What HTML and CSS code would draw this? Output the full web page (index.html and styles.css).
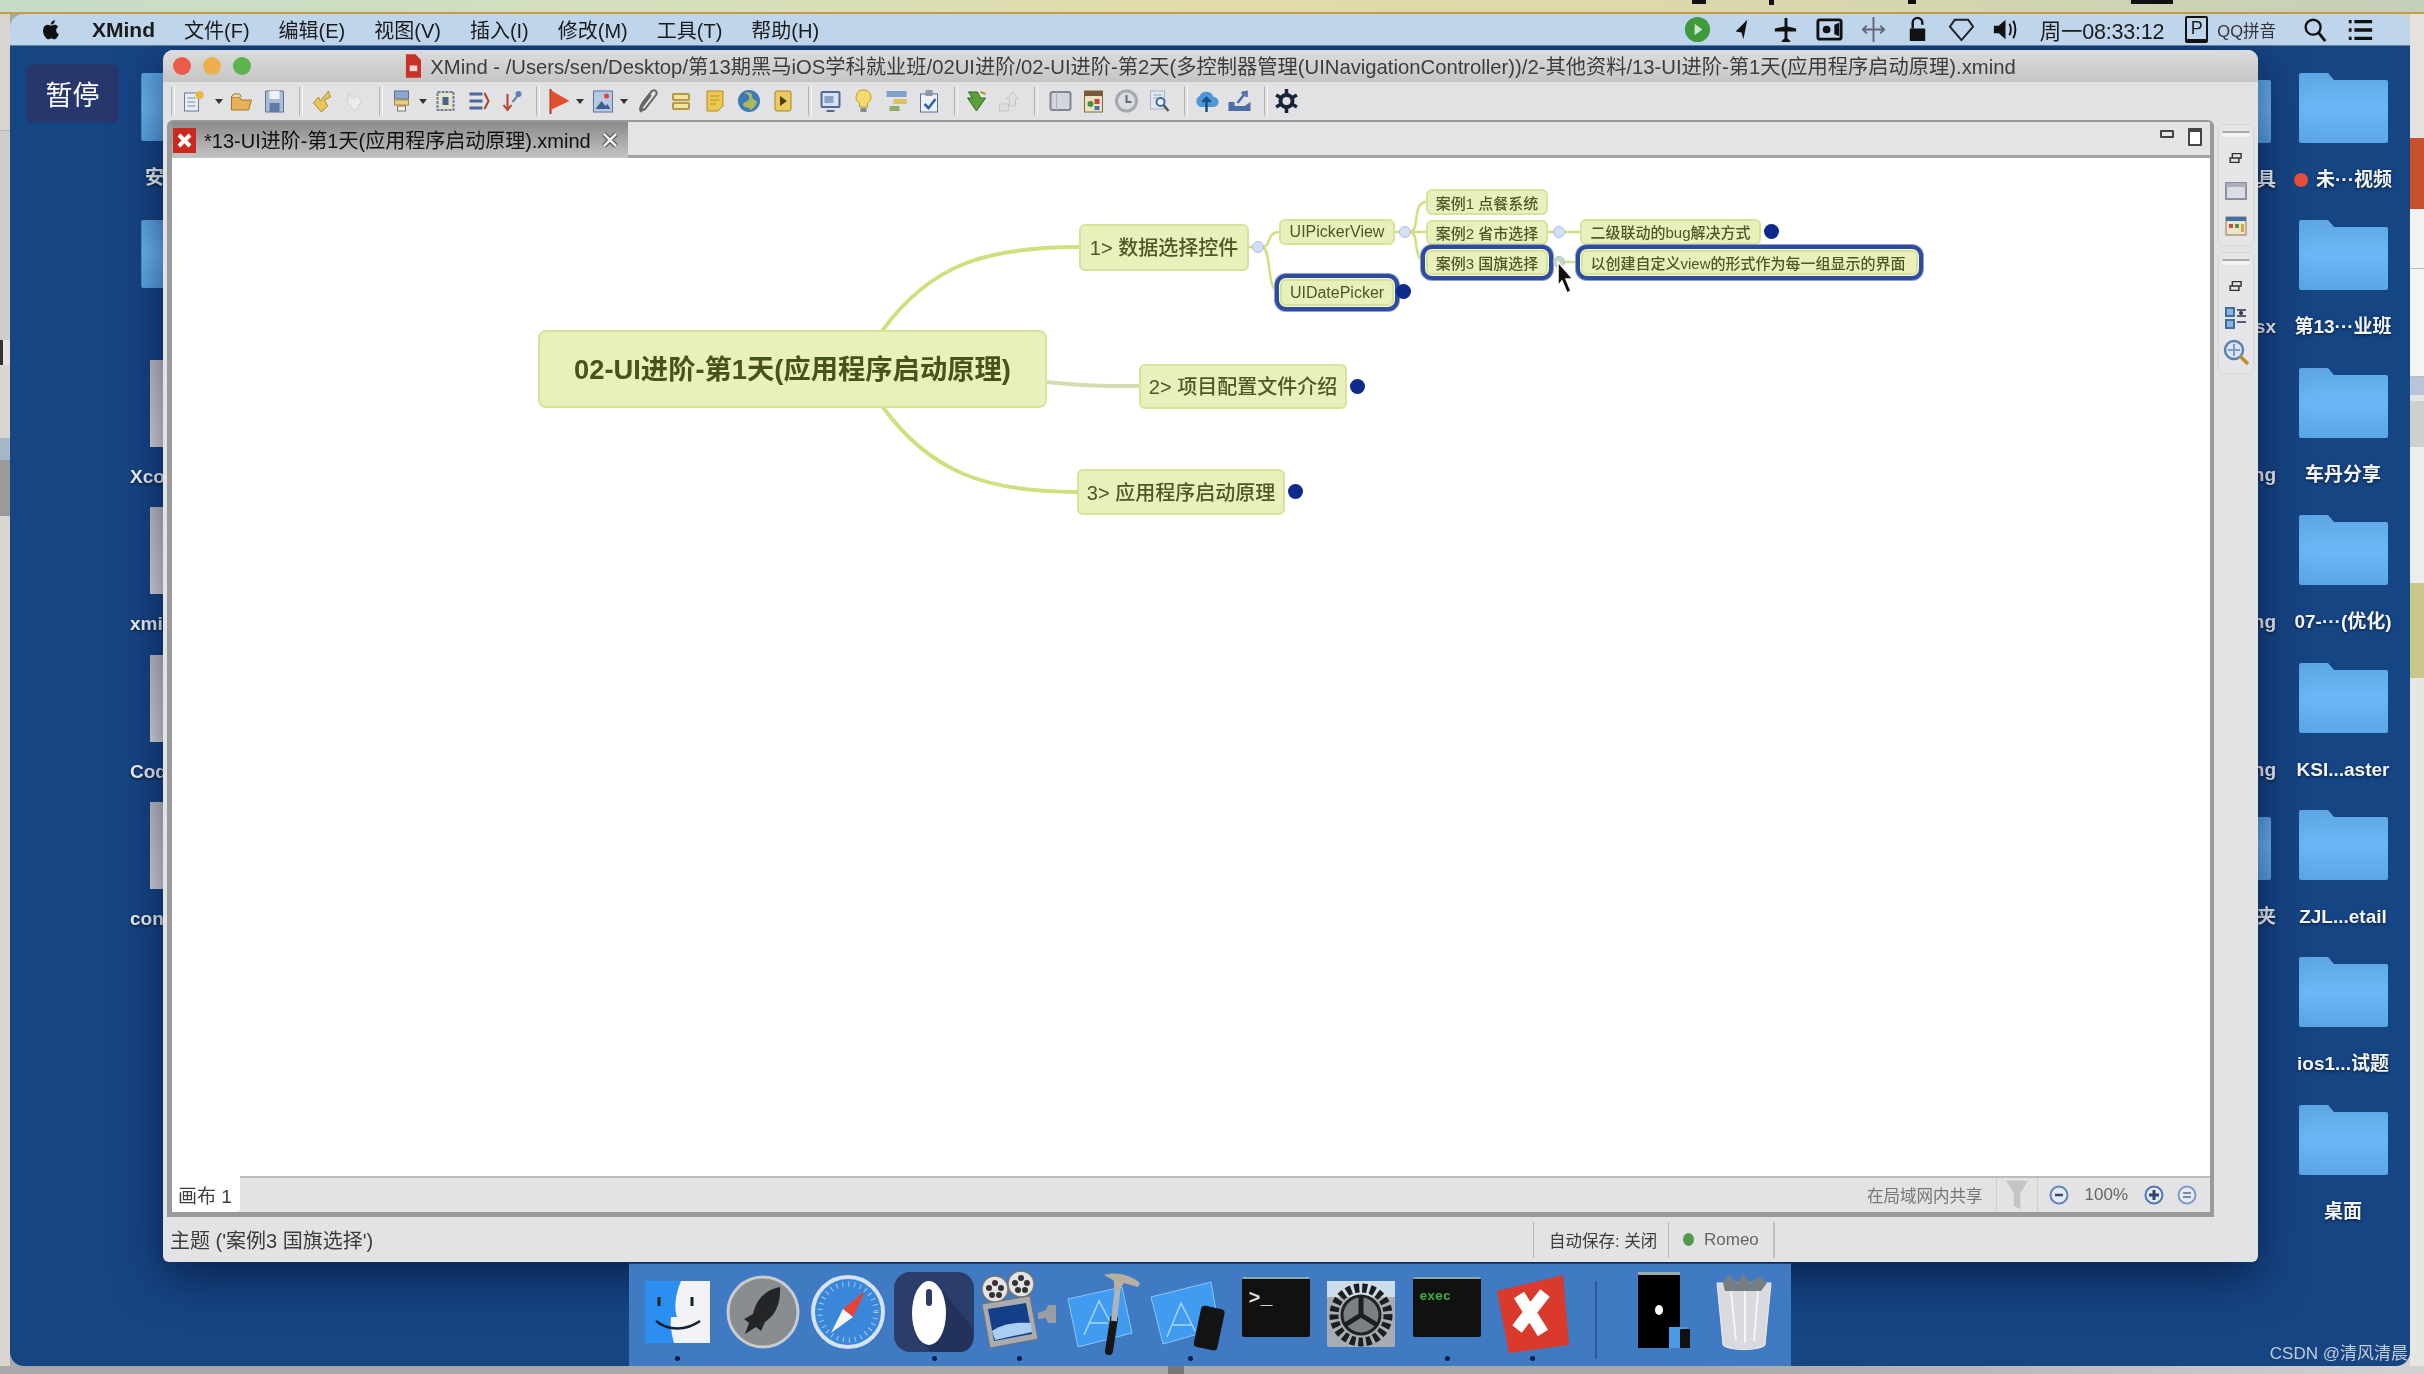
FILE: index.html
```html
<!DOCTYPE html>
<html lang="zh">
<head>
<meta charset="utf-8">
<title>XMind</title>
<link rel="stylesheet" href="styles.css">
</head>
<body>
<div class="stage">
  <div class="wall"><i class="sil s1"></i><i class="sil s2"></i><i class="sil s3"></i><i class="sil s4"></i></div>
  <div class="mid">
    <div class="edge-l"><i class="el a"></i><i class="el b"></i><i class="el c"></i><i class="el d"></i><i class="el e"></i></div>
    <div class="screen">
      <header class="menubar">
        <nav class="menu-left">
          <svg class="apple" viewBox="0 0 24 28"><path d="M17 14.6c0-3 2.4-4.400 2.500-4.500-1.400-2-3.500-2.300-4.200-2.300-1.800-.2-3.500 1-4.400 1s-2.300-1-3.800-1C5 7.800 3.200 8.900 2.200 10.600c-2 3.500-.5 8.700 1.500 11.600 1 1.400 2.100 3 3.700 2.900 1.500-.1 2-1 3.800-1s2.300 1 3.800.9c1.600 0 2.600-1.400 3.600-2.900 1.100-1.600 1.600-3.200 1.600-3.300-.1 0-3.200-1.200-3.200-4.600zM14.100 5.900c.8-1 1.300-2.300 1.200-3.700-1.200 0-2.600.8-3.400 1.800-.7.900-1.400 2.200-1.200 3.500 1.300.1 2.600-.7 3.400-1.600z" fill="#111"/></svg>
          <b class="menu-app">XMind</b>
          <span>文件(F)</span><span>编辑(E)</span><span>视图(V)</span><span>插入(I)</span><span>修改(M)</span><span>工具(T)</span><span>帮助(H)</span>
        </nav>
        <div class="menu-right">
          <div class="tray">
            <svg viewBox="0 0 30 30"><circle cx="15" cy="15" r="13" fill="#3f9a3c"/><path d="M12 9l8 6-8 6z" fill="#cfe8cc"/></svg>
            <svg viewBox="0 0 30 30"><path d="M21 5L9 17l6 1 2 7z" fill="#111"/></svg>
            <svg viewBox="0 0 30 30"><path d="M14 3h3v9l9 2v3h-9v7l3 3v1h-9v-1l3-3v-7H4v-3l10-2z" fill="#111"/></svg>
            <svg viewBox="0 0 30 30"><rect x="3" y="5" width="24" height="20" rx="2" fill="none" stroke="#111" stroke-width="3"/><path d="M20 10l5-2v14l-5-2z" fill="#111"/><circle cx="12" cy="15" r="4" fill="#111"/></svg>
            <svg viewBox="0 0 30 30"><path d="M15 2v26M8 11l-4 4 4 4M22 11l4 4-4 4M5 15h20" stroke="#667" stroke-width="2" fill="none"/></svg>
            <svg viewBox="0 0 30 30"><rect x="7" y="14" width="16" height="13" rx="1" fill="#111"/><path d="M10 14V8a5 5 0 0 1 10 0v2" fill="none" stroke="#111" stroke-width="2.500"/></svg>
            <svg viewBox="0 0 30 30"><path d="M15 26L3 12l5-7h14l5 7z" fill="none" stroke="#222" stroke-width="2"/></svg>
            <svg viewBox="0 0 30 30"><path d="M3 11h5l7-6v20l-7-6H3z" fill="#111"/><path d="M19 9c2 3 2 9 0 12M23 6c3 5 3 13 0 18" fill="none" stroke="#111" stroke-width="2"/></svg>
          </div>
          <span class="clock">周一08:33:12</span>
          <span class="ime-box">P</span>
          <span class="ime">QQ拼音</span>
          <svg class="mi search" viewBox="0 0 30 30"><circle cx="13" cy="12" r="8" fill="none" stroke="#111" stroke-width="2.500"/><path d="M19 18l7 9" stroke="#111" stroke-width="3"/></svg>
          <svg class="mi list" viewBox="0 0 30 30"><path d="M3 6h3M9 6h19M3 15h3M9 15h19M3 24h3M9 24h19" stroke="#111" stroke-width="3.500"/></svg>
        </div>
      </header>

      <main class="desktop">
        <section class="col col-left">
          <div class="item"><svg class="folder"><use href="#folder"/></svg><p class="lbl first-lbl">安装工具</p></div>
          <div class="item"><svg class="folder"><use href="#folder"/></svg><p class="lbl">&nbsp;</p></div>
          <div class="item"><div class="doc"></div><p class="lbl">Xcode</p></div>
          <div class="item"><div class="doc"></div><p class="lbl">xmind</p></div>
          <div class="item"><div class="doc"></div><p class="lbl">Coder</p></div>
          <div class="item"><div class="doc"></div><p class="lbl">conf</p></div>
        </section>
        <section class="col col-mid">
          <div class="item"><svg class="folder"><use href="#folder"/></svg><p class="lbl">软件工具</p></div>
          <div class="item"><div class="blank"></div><p class="lbl">表格.xlsx</p></div>
          <div class="item"><div class="blank"></div><p class="lbl">截图.png</p></div>
          <div class="item"><div class="blank"></div><p class="lbl">截图.png</p></div>
          <div class="item"><div class="blank"></div><p class="lbl">截图.png</p></div>
          <div class="item"><svg class="folder"><use href="#folder"/></svg><p class="lbl">文件夹</p></div>
        </section>
        <section class="col col-right">
          <div class="item"><svg class="folder"><use href="#folder"/></svg><p class="lbl"><i class="tag"></i>未···视频</p></div>
          <div class="item"><svg class="folder"><use href="#folder"/></svg><p class="lbl">第13···业班</p></div>
          <div class="item"><svg class="folder"><use href="#folder"/></svg><p class="lbl">车丹分享</p></div>
          <div class="item"><svg class="folder"><use href="#folder"/></svg><p class="lbl">07-···(优化)</p></div>
          <div class="item"><svg class="folder"><use href="#folder"/></svg><p class="lbl">KSI...aster</p></div>
          <div class="item"><svg class="folder"><use href="#folder"/></svg><p class="lbl">ZJL...etail</p></div>
          <div class="item"><svg class="folder"><use href="#folder"/></svg><p class="lbl">ios1...试题</p></div>
          <div class="item"><svg class="folder"><use href="#folder"/></svg><p class="lbl">桌面</p></div>
        </section>

        <div class="pause">暂停</div>

        <section class="window">
          <div class="titlebar">
            <div class="lights"><i class="light red"></i><i class="light amber"></i><i class="light green"></i></div>
            <div class="title">
              <svg class="title-ico" viewBox="0 0 17 25"><path d="M1 0h10l6 6v19H1z" fill="#c8322a"/><rect x="5" y="12" width="8" height="6" fill="#f3d8d5"/></svg>
              <span>XMind - /Users/sen/Desktop/第13期黑马iOS学科就业班/02UI进阶/02-UI进阶-第2天(多控制器管理(UINavigationController))/2-其他资料/13-UI进阶-第1天(应用程序启动原理).xmind</span>
            </div>
          </div>

          <div class="toolbar">
            <i class="sep"></i>
            <svg class="ti" viewBox="0 0 26 26"><rect x="4" y="5" width="14" height="18" fill="#e8ecf4" stroke="#6b7c99"/><path d="M7 10h8M7 14h8M7 18h8" stroke="#7b8aa5"/><circle cx="19" cy="7" r="4" fill="#e8b93a"/></svg><i class="ar ar1"></i>
            <svg class="ti" viewBox="0 0 26 26"><path d="M3 9h8l2 3h10l-3 10H3z" fill="#e6b15a" stroke="#a27424"/><path d="M3 9l2-3h6l2 3" fill="#f1d9a5" stroke="#a27424"/></svg>
            <svg class="ti" viewBox="0 0 26 26"><path d="M4 3h18v21H4z" fill="#a9bbd8" stroke="#5f7395"/><rect x="8" y="3" width="10" height="8" fill="#eef1f6"/><rect x="8" y="15" width="10" height="9" fill="#5f7aa5"/></svg>
            <i class="sep"></i>
            <svg class="ti" viewBox="0 0 26 26"><path d="M20 3l2 6-6 3 3 6-6 6-8-9 5-6 2 4z" fill="#e9c65a" stroke="#a98a28"/></svg>
            <svg class="ti" viewBox="0 0 26 26"><path d="M7 5l5 6 3-4 5 6-6 10-8-8z" fill="#ececec" stroke="#cfcfcf"/></svg>
            <i class="sep"></i>
            <svg class="ti" viewBox="0 0 26 26"><rect x="6" y="3" width="14" height="8" fill="#8fa6cc" stroke="#5c6f93"/><rect x="6" y="12" width="14" height="5" fill="#e8cf7e" stroke="#a08b3d"/><rect x="9" y="18" width="8" height="5" fill="#f3f1e6" stroke="#777"/></svg><i class="ar"></i>
            <svg class="ti" viewBox="0 0 26 26"><rect x="5" y="4" width="16" height="18" fill="#e6e6c6" stroke="#6f7fa3" stroke-dasharray="3 1" stroke-width="2"/><rect x="10" y="9" width="6" height="8" fill="#4c6291"/></svg>
            <svg class="ti" viewBox="0 0 26 26"><path d="M4 6h13M4 13h13M4 20h13" stroke="#4d6799" stroke-width="3"/><path d="M19 5l4 8-4 8" fill="none" stroke="#a5432f" stroke-width="2"/></svg>
            <svg class="ti" viewBox="0 0 26 26"><path d="M9 6v14M5 17l4 5 4-5" fill="none" stroke="#b3402c" stroke-width="2"/><circle cx="20" cy="6" r="3" fill="#5d7fb5"/><path d="M14 14l5-6" stroke="#6a7e9f" stroke-width="2"/></svg>
            <i class="sep"></i>
            <svg class="ti" viewBox="0 0 26 26"><path d="M5 1v25" stroke="#a23a22" stroke-width="2"/><path d="M5 2l19 11L5 22z" fill="#e2512e"/></svg><i class="ar"></i>
            <svg class="ti" viewBox="0 0 26 26"><rect x="4" y="3" width="19" height="21" fill="#b9c9e3" stroke="#5f7395"/><path d="M6 21l6-8 4 5 2-2 3 5z" fill="#3f5f92"/><circle cx="17" cy="8" r="2.500" fill="#d9473a"/></svg><i class="ar"></i>
            <svg class="ti tw" viewBox="0 0 26 26"><path d="M8 24c-5-3 0-9 10-21 3-2 6 1 4 4L11 21c-2 2-4 0-3-2l9-12" fill="none" stroke="#666" stroke-width="2"/></svg>
            <svg class="ti tw" viewBox="0 0 26 26"><rect x="5" y="6" width="16" height="6" rx="1" fill="#f3e3a0" stroke="#b89a3e" stroke-width="2"/><rect x="5" y="15" width="16" height="6" rx="1" fill="#f3e3a0" stroke="#b89a3e" stroke-width="2"/></svg>
            <svg class="ti tw" viewBox="0 0 26 26"><path d="M5 3h16v15l-5 5H5z" fill="#ecc84f" stroke="#ae8d25"/><path d="M8 8h9M8 12h9M8 16h6" stroke="#b4912e"/></svg>
            <svg class="ti tw" viewBox="0 0 26 26"><circle cx="13" cy="13" r="11" fill="#3e78b6"/><path d="M8 5c4 1 6 3 5 6s-6 2-6 6c2 4 6 1 7 5 5-2 7-6 7-9-4-1-5-3-5-7-3-2-5-2-8-1z" fill="#a8b85a"/></svg>
            <svg class="ti tw" viewBox="0 0 26 26"><rect x="5" y="3" width="16" height="20" rx="2" fill="#eccb5e" stroke="#9f8530"/><path d="M10 8l7 5-7 5z" fill="#4a3d14"/></svg>
            <i class="sep"></i>
            <svg class="ti" viewBox="0 0 26 26"><rect x="4" y="4" width="18" height="15" rx="1" fill="#d7e3f2" stroke="#4f6a94" stroke-width="2"/><rect x="7" y="8" width="9" height="7" fill="#88a4c9"/><path d="M9 23h8" stroke="#4f6a94" stroke-width="2"/></svg>
            <svg class="ti" viewBox="0 0 26 26"><path d="M13 2a7 7 0 0 1 4 13v4H9v-4a7 7 0 0 1 4-13z" fill="#f3da6a" stroke="#b89a30"/><rect x="10" y="20" width="6" height="4" fill="#888"/></svg>
            <svg class="ti" viewBox="0 0 26 26"><rect x="3" y="3" width="20" height="6" fill="#7fa0c8"/><rect x="10" y="11" width="13" height="5" fill="#dcc15c"/><rect x="6" y="18" width="10" height="5" fill="#8fae6a"/></svg>
            <svg class="ti" viewBox="0 0 26 26"><rect x="4" y="6" width="17" height="18" fill="#eef2f8" stroke="#566f98"/><rect x="9" y="2" width="7" height="6" fill="#8a97ad"/><path d="M8 16l4 4 7-9" fill="none" stroke="#2f62a7" stroke-width="2.500"/></svg>
            <i class="sep"></i>
            <svg class="ti" viewBox="0 0 26 26"><path d="M5 4h9l3 6h5l-9 13-9-13h5z" fill="#5aa03a" stroke="#2f6a1e"/><path d="M17 4l5 2" stroke="#b3962c" stroke-width="2"/></svg>
            <svg class="ti fade" viewBox="0 0 26 26"><path d="M3 16h9v7H3z" fill="#ddd" stroke="#c7c7c7"/><path d="M16 4l6 7h-3v7h-6v-7h-3z" fill="#dfdfdf" stroke="#c4c4c4"/></svg>
            <i class="sep"></i>
            <svg class="ti ml4" viewBox="0 0 26 26"><rect x="3" y="4" width="20" height="18" rx="2" fill="#d4d5da" stroke="#7d8592" stroke-width="2"/><path d="M9 4v18" stroke="#aab0ba"/></svg>
            <svg class="ti" viewBox="0 0 26 26"><rect x="4" y="3" width="18" height="21" fill="#ebe3c4" stroke="#7a6a3b"/><rect x="4" y="3" width="18" height="5" fill="#7d5a35"/><circle cx="10" cy="16" r="3" fill="#43933d"/><rect x="14" y="11" width="5" height="5" fill="#c5463a"/><rect x="14" y="18" width="5" height="4" fill="#4d72b3"/></svg>
            <svg class="ti" viewBox="0 0 26 26"><circle cx="13" cy="13" r="10" fill="#dadde2" stroke="#a5a8ad" stroke-width="3"/><path d="M13 7v7h5" fill="none" stroke="#667" stroke-width="2"/></svg>
            <svg class="ti" viewBox="0 0 26 26"><rect x="4" y="3" width="14" height="18" fill="#dfe7f2" stroke="#a8b6c9"/><path d="M7 7h8M7 10h4" stroke="#8fa2bf"/><circle cx="14" cy="14" r="4" fill="#f0f4f9" stroke="#3d6aa6" stroke-width="2"/><path d="M17 17l5 6" stroke="#555" stroke-width="2.500"/></svg>
            <i class="sep"></i>
            <svg class="ti" viewBox="0 0 26 26"><path d="M7 19a6 6 0 0 1-1-11 7.500 7.500 0 0 1 14 1 5 5 0 0 1 0 10z" fill="#4f97d8"/><path d="M13 24V11M9 14l4-4 4 4" fill="none" stroke="#16507f" stroke-width="2.500"/></svg>
            <svg class="ti" viewBox="0 0 26 26"><path d="M2 14h6v4h10l6-4v9H2z" fill="#4e6da5"/><path d="M11 15l7-9M15 5l5-1 0 5" fill="none" stroke="#4e6da5" stroke-width="2.500"/></svg>
            <i class="sep"></i>
            <svg class="ti" viewBox="0 0 26 26"><circle cx="13" cy="13" r="6" fill="none" stroke="#17263d" stroke-width="4"/><path d="M13 1v6M13 19v6M2.600 7l5.200 3M18.200 16l5.200 3M2.600 19l5.200-3M18.200 10l5.200-3" stroke="#17263d" stroke-width="3.500"/></svg>
          </div>

          <div class="workarea">
            <div class="editor">
              <div class="tabs">
                <div class="tab">
                  <svg class="tab-ico" viewBox="0 0 23 25"><rect width="23" height="25" fill="#c9291f"/><path d="M6 7l11 11M17 7L6 18" stroke="#fff" stroke-width="4"/></svg>
                  <span class="tab-text">*13-UI进阶-第1天(应用程序启动原理).xmind</span>
                  <svg class="tab-x" viewBox="0 0 16 16"><path d="M2 2l12 12M14 2L2 14" stroke="#555" stroke-width="5"/><path d="M2 2l12 12M14 2L2 14" stroke="#eee" stroke-width="2.500"/></svg>
                </div>
                <div class="tab-fill">
                  <i class="win-min"></i><i class="win-max"></i>
                </div>
              </div>
              <div class="canvas">
                <svg class="links" viewBox="172 158 2038 1018">
                  <path class="l-main" d="M882 331C930 265 985 247 1079 247"/>
                  <path class="l-main alt" d="M1047 382C1085 386 1100 386 1139 386"/>
                  <path class="l-main" d="M882 406C930 472 985 492 1077 492"/>
                  <path class="l-sub" d="M1249 247H1262C1272 247 1266 232 1279 232"/>
                  <path class="l-sub" d="M1262 247C1272 247 1266 292 1279 292"/>
                  <path class="l-sub" d="M1395 232H1426"/>
                  <path class="l-sub" d="M1410 232C1420 232 1412 202 1426 202"/>
                  <path class="l-sub" d="M1410 232C1420 232 1412 262 1426 262"/>
                  <path class="l-sub" d="M1548 232H1580"/>
                  <path class="l-sub" d="M1554 262H1575"/>
                </svg>
                <div class="node n-center">02-UI进阶-第1天(应用程序启动原理)</div>
                <div class="node big n1">1&gt; 数据选择控件</div>
                <div class="node big n2">2&gt; 项目配置文件介绍</div>
                <div class="node big n3">3&gt; 应用程序启动原理</div>
                <div class="node small n-picker latin">UIPickerView</div>
                <div class="node small n-date latin sel">UIDatePicker</div>
                <div class="node small n-c1">案例1 点餐系统</div>
                <div class="node small n-c2">案例2 省市选择</div>
                <div class="node small n-c3 sel">案例3 国旗选择</div>
                <div class="node small n-bug">二级联动的bug解决方式</div>
                <div class="node small n-view sel">以创建自定义view的形式作为每一组显示的界面</div>
                <i class="fold f1"></i><i class="fold f2"></i><i class="fold f3"></i><i class="fold f4"></i>
                <i class="mark m1"></i><i class="mark m2"></i><i class="mark m3"></i><i class="mark m4"></i>
                <svg class="cursor" viewBox="0 0 20 34"><path d="M2 1l15 17-7 0 5 12-4 2-5-12-4 5z" fill="#111" stroke="#fff" stroke-width="1.500"/></svg>
              </div>
              <div class="sheetbar">
                <div class="sheet">画布 1</div>
                <div class="sheet-right">
                  <span class="share">在局域网内共享</span>
                  <i class="vline"></i>
                  <svg class="funnel" viewBox="0 0 26 36"><path d="M0 1h26L17 16v19l-8-4V16z" fill="#c4c4c4"/></svg>
                  <i class="vline"></i>
                  <svg class="zoom-btn first" viewBox="0 0 20 20"><circle cx="10" cy="10" r="8.500" fill="#e6eaf2" stroke="#6285bd" stroke-width="2"/><path d="M6 10h8" stroke="#33486f" stroke-width="2.500"/></svg>
                  <span class="pct">100%</span>
                  <svg class="zoom-btn" viewBox="0 0 20 20"><circle cx="10" cy="10" r="8.500" fill="#e6eaf2" stroke="#5077b5" stroke-width="2"/><path d="M5 10h10M10 5v10" stroke="#2e4672" stroke-width="3"/></svg>
                  <svg class="zoom-btn" viewBox="0 0 20 20"><circle cx="10" cy="10" r="8.500" fill="#e6eaf2" stroke="#7c9aca" stroke-width="2"/><path d="M6 8h8M6 12h8" stroke="#5a6b8c" stroke-width="1.500"/></svg>
                </div>
              </div>
            </div>
            <aside class="side">
              <div class="side-box box-a">
                <i class="grip"></i>
                <svg class="si" viewBox="0 0 22 22"><path d="M6 5h12v6H6zM3 11h12v6H3z" fill="#e5e5e5" stroke="#333" stroke-width="2"/></svg>
                <svg class="si" viewBox="0 0 22 22"><rect x="1" y="3" width="20" height="16" fill="#dcdde2" stroke="#8a8f99" stroke-width="2"/><rect x="1" y="3" width="20" height="4" fill="#aab0bb"/></svg>
                <svg class="si" viewBox="0 0 22 22"><rect x="1" y="2" width="20" height="18" fill="#ece4c8" stroke="#8a7c4e"/><rect x="1" y="2" width="20" height="4" fill="#3f6fa8"/><rect x="4" y="9" width="4" height="4" fill="#c74a3a"/><rect x="10" y="9" width="4" height="4" fill="#4a9a48"/><rect x="16" y="9" width="3" height="8" fill="#d6a63a"/></svg>
              </div>
              <div class="side-box box-b">
                <i class="grip"></i>
                <svg class="si" viewBox="0 0 22 22"><path d="M6 5h12v6H6zM3 11h12v6H3z" fill="#e5e5e5" stroke="#333" stroke-width="2"/></svg>
                <svg class="si" viewBox="0 0 22 22"><rect x="1" y="1" width="8" height="8" fill="#8cb2dd" stroke="#3d6ea6" stroke-width="2"/><rect x="1" y="13" width="8" height="8" fill="#8cb2dd" stroke="#3d6ea6" stroke-width="2"/><path d="M12 3h9M12 9h9M12 15h9" stroke="#4e5f77" stroke-width="2"/><circle cx="16" cy="6" r="2" fill="#334"/></svg>
                <svg class="si big-si" viewBox="0 0 26 26"><circle cx="11" cy="11" r="9" fill="#dbe6f4" stroke="#5c82b4" stroke-width="2.500"/><path d="M11 5v12M5 11h12" stroke="#7d9dc6" stroke-width="2"/><path d="M17 17l8 8" stroke="#bf8b35" stroke-width="3.500"/></svg>
              </div>
            </aside>
          </div>

          <footer class="statusbar">
            <span class="status-main">主题 ('案例3 国旗选择')</span>
            <span class="status-cell auto">自动保存: 关闭</span>
            <span class="status-cell user"><i class="dot"></i>Romeo</span>
          </footer>
        </section>

        <div class="dock">
          <div class="slot run"><svg viewBox="0 0 86 86"><rect x="11" y="12" width="65" height="62" fill="#f0f2f6"/><path d="M11 12h36c-6 14-7 28-4 36h-6c-1 10 1 18 3 26H11z" fill="#2a8ff0"/><path d="M25 28v9M58 28v9" stroke="#122" stroke-width="3"/><path d="M22 52c12 10 30 10 44 0" fill="none" stroke="#123" stroke-width="2.500"/></svg></div>
          <div class="slot"><svg viewBox="0 0 86 86"><circle cx="43" cy="43" r="35" fill="#8a8d90" stroke="#c9cbcd" stroke-width="3"/><path d="M60 18c-16 3-24 14-27 27l-9 5 5 4-4 11 11-7 5 4 4-9c10-6 16-18 15-35z" fill="#232527"/></svg></div>
          <div class="slot"><svg viewBox="0 0 86 86"><circle cx="43" cy="43" r="35" fill="#3a86d8" stroke="#d5e3f2" stroke-width="4"/><circle cx="43" cy="43" r="28" fill="none" stroke="#a9cdf0" stroke-dasharray="1 5" stroke-width="5"/><path d="M60 22L38 40l10 8z" fill="#e84234"/><path d="M26 64l12-24 10 8z" fill="#f5f5f5"/></svg></div>
          <div class="slot run"><svg viewBox="0 0 86 86"><rect x="3" y="3" width="80" height="80" rx="16" fill="#2a3d6b"/><path d="M52 22l30 38v10a13 13 0 0 1-13 13H40L24 66z" fill="#22325a"/><ellipse cx="38" cy="44" rx="17" ry="32" fill="#fff"/><rect x="35" y="20" width="6" height="17" rx="3" fill="#2a3d6b"/></svg></div>
          <div class="slot run"><svg viewBox="0 0 86 86"><circle cx="19" cy="20" r="13" fill="#e4e4e4" stroke="#777" stroke-width="1.500"/><circle cx="19" cy="14" r="3" fill="#333"/><circle cx="13" cy="19" r="3" fill="#333"/><circle cx="25" cy="19" r="3" fill="#333"/><circle cx="16" cy="26" r="3" fill="#333"/><circle cx="23" cy="26" r="3" fill="#333"/><circle cx="45" cy="15" r="13" fill="#e4e4e4" stroke="#777" stroke-width="1.500"/><circle cx="45" cy="9" r="3" fill="#333"/><circle cx="39" cy="14" r="3" fill="#333"/><circle cx="51" cy="14" r="3" fill="#333"/><circle cx="42" cy="21" r="3" fill="#333"/><circle cx="49" cy="21" r="3" fill="#333"/><path d="M6 35l48-8 8 43-48 9z" fill="#a9abad" stroke="#6f7174"/><path d="M12 40l38-6 6 31-38 7z" fill="#123f88"/><path d="M16 62c12-8 26-9 39-8l1 9-37 8z" fill="#a9cff2"/><path d="M62 44l8-3 2-5h8v18h-8l-2-5-8 1z" fill="#9a9ea3"/></svg></div>
          <div class="slot"><svg viewBox="0 0 86 86"><path d="M6 30l54-12 10 46-54 14z" fill="#3f9cf0" stroke="#8cc6f8"/><path d="M22 66l15-34 15 28M28 54h18" stroke="#a9d4f8" stroke-width="1.500" fill="none"/><path d="M52 50l-5 32" stroke="#171717" stroke-width="8" stroke-linecap="round"/><path d="M56 16l-4 36" stroke="#aeb4ba" stroke-width="6"/><path d="M42 6c10-3 24-2 36 8l-2 4-14-4-4 6h-6l0-8c-4-3-7-4-10-6z" fill="#b8b09f"/></svg></div>
          <div class="slot run"><svg viewBox="0 0 86 86"><path d="M4 28l60-15 8 46-56 16z" fill="#3f9cf0" stroke="#8cc6f8"/><path d="M20 68l14-34 14 28M26 56h18" stroke="#a9d4f8" stroke-width="1.500" fill="none"/><rect x="50" y="38" width="24" height="42" rx="4" transform="rotate(12 62 60)" fill="#141414"/></svg></div>
          <div class="slot"><div class="term"><span>&gt;_</span></div></div>
          <div class="slot"><svg viewBox="0 0 86 86"><rect x="9" y="12" width="68" height="66" rx="2" fill="#a7adb4"/><rect x="9" y="12" width="68" height="16" fill="#cfdcea"/><circle cx="43" cy="46" r="27" fill="none" stroke="#1e1e1e" stroke-width="9" stroke-dasharray="5 3"/><circle cx="43" cy="46" r="19" fill="#7c8084" stroke="#222" stroke-width="3"/><path d="M43 46V27M43 46l16 10M43 46L27 56" stroke="#1e1e1e" stroke-width="5"/></svg></div>
          <div class="slot run"><div class="term exec"><span>exec</span></div></div>
          <div class="slot run"><svg viewBox="0 0 86 86"><path d="M8 22l66-16 6 70-60 8z" fill="#d93a2b"/><path d="M30 26l24 38M56 24L28 60" stroke="#fff" stroke-width="12"/></svg></div>
          <i class="dock-sep"></i>
          <div class="slot"><svg viewBox="0 0 86 86"><rect x="22" y="3" width="42" height="76" fill="#000"/><rect x="22" y="3" width="42" height="3" fill="#9aa"/><ellipse cx="43" cy="41" rx="4" ry="5" fill="#fff"/><rect x="53" y="58" width="18" height="21" fill="#4d9be4"/><rect x="64" y="60" width="10" height="19" rx="1" fill="#111"/></svg></div>
          <div class="slot"><svg viewBox="0 0 86 86"><path d="M16 14h54l-6 62c-4 6-38 6-42 0z" fill="#d9dadd" stroke="#eceded"/><path d="M22 14l6 -8 8 8 6-9 8 9 8-7 8 7-6 8H24z" fill="#777d84"/><path d="M30 22l5 50M44 22v52M57 22l-4 50" stroke="#f4f4f4" stroke-width="2"/></svg></div>
        </div>
        <span class="watermark">CSDN @清风清晨</span>
      </main>
    </div>
    <div class="edge-r"><i class="er a"></i><i class="er b"></i><i class="er c"></i><i class="er d"></i><i class="er e"></i><i class="er f"></i><i class="er g"></i><i class="er h"></i></div>
  </div>
  <div class="floor"><i class="floor-tab"></i></div>
</div>
<svg class="sprite" width="0" height="0"><defs>
  <linearGradient id="fg" x1="0" y1="0" x2="0" y2="1"><stop offset="0" stop-color="#5ea6e4"/><stop offset=".5" stop-color="#6cb8f6"/><stop offset="1" stop-color="#5aa6e6"/></linearGradient>
  <symbol id="folder" viewBox="0 0 89 70"><path d="M2 0h27l6 7h52a2 2 0 0 1 2 2v59a2 2 0 0 1-2 2H2a2 2 0 0 1-2-2V2a2 2 0 0 1 2-2z" fill="url(#fg)"/></symbol>
</defs></svg>
</body>
</html>
```

FILE: styles.css
```css
* { box-sizing: border-box; }
html, body { margin: 0; padding: 0; }
body {
  width: 2424px;
  height: 1374px;
  overflow: hidden;
  background: #aaa;
  font-family: "Liberation Sans", "Noto Sans CJK SC", sans-serif;
  color: #222;
}
i { display: block; }
p { margin: 0; }
svg { display: block; }
.sprite { position: absolute; }

.stage { width: 2424px; height: 1374px; display: flex; flex-direction: column; filter: blur(0.6px); background: linear-gradient(90deg, #a8a8a8 0%, #a8a8a8 70%, #d2d2d2 100%); }

/* wallpaper sliver above the recorded screen */
.wall {
  height: 14px;
  position: relative;
  background: linear-gradient(90deg, #c6dcc8 0%, #d6dfbb 30%, #e2dba8 50%, #dcd8ac 70%, #c4cfb8 100%);
  border-bottom: 2px solid #c59b45;
}
.sil { position: absolute; top: 0; height: 4px; background: #111; }
.s1 { left: 1692px; width: 14px; }
.s2 { left: 1769px; width: 5px; height: 5px; }
.s3 { left: 1908px; width: 8px; }
.s4 { left: 2131px; width: 42px; }

.mid { height: 1352px; display: flex; }
.edge-l { width: 10px; background: #d9d6d2; display: flex; flex-direction: column; }
.el.a { height: 117px; background: #d8d4cf; border-bottom: 1px solid #b9b6b2; }
.el.b { height: 209px; background: #cfcdca; }
.el.c { height: 25px; background: #e6e4e1; border-left: 3px solid #333; }
.el.d { height: 22px; background: #a7b5c9; margin-top: 73px; }
.el.e { height: 56px; background: #9c9a98; }
.edge-r { width: 14px; background: #e8e6e3; display: flex; flex-direction: column; }
.er.a { height: 124px; background: #e5e1dc; }
.er.b { height: 71px; background: #c9502e; }
.er.c { height: 60px; background: #f3f2f0; border-bottom: 1px solid #bbb; }
.er.d { height: 108px; background: #f4f4f3; border-bottom: 1px solid #bbb; }
.er.e { height: 18px; background: #b7c4da; }
.er.f { height: 52px; background: #cfcfcf; border-top: 6px solid #e4e4e4; }
.er.g { height: 136px; background: #ededed; }
.er.h { height: 95px; background: #c9c68a; }

.screen { width: 2400px; height: 1352px; display: flex; flex-direction: column; border-radius: 14px 14px 14px 14px; overflow: hidden; }

/* menu bar */
.menubar {
  height: 32px;
  flex: none;
  background: #bed5eb;
  border-bottom: 1px solid #5d7ea3;
  display: flex;
  align-items: center;
  justify-content: space-between;
  font-size: 20px;
  color: #1a1a1a;
}
.menu-left { display: flex; align-items: center; gap: 29px; padding-left: 32px; }
.apple { width: 20px; height: 26px; margin-right: 1px; }
.menu-app { font-size: 21px; margin-right: 0; }
.menu-right { display: flex; align-items: center; padding-right: 36px; }
.tray { display: flex; gap: 15px; margin-right: 20px; }
.tray svg { width: 29px; height: 29px; }
.clock { font-size: 21.500px; letter-spacing: -0.2px; }
.ime-box {
  width: 23px; height: 27px; margin-left: 21px;
  border: 2px solid #111; border-bottom-width: 4px; border-radius: 2px;
  font-size: 18px; line-height: 20px; text-align: center;
}
.ime { font-size: 16.500px; margin-left: 9px; color: #333; }
.mi { width: 28px; height: 28px; }
.search { margin-left: 25px; }
.list { margin-left: 17px; }

/* desktop */
.desktop {
  flex: 1;
  position: relative;
  overflow: hidden;
  background: #164584;
}
.col { position: absolute; top: 27px; width: 100px; display: flex; flex-direction: column; }
.col-left { left: 119px; }
.col-mid { left: 2166px; }
.col-right { left: 2283px; }
.item { height: 147.400px; flex: none; }
.folder { width: 89px; height: 70px; display: block; }
.col-right .folder, .col-mid .folder { margin: 0 auto; }
.col-left .folder { margin-left: 11px; height: 68px; }
.doc { width: 60px; height: 87px; margin: -8px 0 0 21px; background: linear-gradient(#c6c6c6, #dedede); }
.blank { height: 70px; }
.lbl {
  margin-top: 25px;
  height: 24px;
  font-size: 19px;
  line-height: 24px;
  font-weight: bold;
  color: #f2f5fa;
  text-align: center;
  white-space: nowrap;
  text-shadow: 0 1px 3px rgba(0, 0, 0, .65);
}
.col-left .lbl { text-align: left; margin-left: 1px; }
.col-left .first-lbl { margin-left: 16px; }
.col-mid .lbl { text-align: right; }
.col-left .item:nth-child(n+3) .lbl { margin-top: 18px; }
.tag { display: inline-block; width: 14px; height: 14px; border-radius: 50%; background: #ea4f3a; margin-right: 8px; vertical-align: -1px; }

.pause {
  position: absolute;
  left: 16px; top: 18px;
  width: 93px; height: 59px;
  border-radius: 8px;
  background: #27376b;
  color: #fff;
  font-size: 27px;
  line-height: 59px;
  padding-top: 3px;
  text-align: center;
}

/* window */
.window {
  position: absolute;
  left: 153px; top: 4px;
  width: 2095px; height: 1212px;
  border-radius: 10px 10px 6px 6px;
  background: #e3e2e4;
  box-shadow: 0 14px 46px rgba(2, 12, 40, .62);
  display: flex;
  flex-direction: column;
}
.titlebar {
  height: 32px;
  flex: none;
  display: grid;
  grid-template-columns: 1fr auto 1fr;
  align-items: center;
  background: linear-gradient(#dedddd, #c6c5c6);
  border-radius: 10px 10px 0 0;
}
.lights { display: flex; gap: 12px; padding-left: 10px; grid-column: 1; grid-row: 1; }
.light { width: 18px; height: 18px; border-radius: 50%; }
.red { background: #ec5a4a; }
.amber { background: #eeb04c; }
.green { background: #5cb350; }
.title { grid-column: 2; grid-row: 1; display: flex; align-items: center; gap: 9px; font-size: 20.250px; color: #3c3c3c; white-space: nowrap; }
.title span { position: relative; top: -1px; }
.title-ico { width: 16px; height: 24px; }

.toolbar { height: 38px; flex: none; display: flex; align-items: center; background: #e2e1e3; }
.sep { width: 8px; height: 30px; margin-left: 6px; flex: none; border-left: 2px solid #b4b4b4; border-right: 2px solid #fafafa; border-radius: 2px; transform: scaleX(.5); }
.ti { width: 33px; height: 26px; flex: none; }
.ti.tw { width: 34px; }
.ti.ml4 { margin-left: 4px; }
.ar { width: 10px; height: 10px; margin-right: 1px; flex: none; position: relative; }
.ar::after { content: ""; display: block; margin: 3px auto 0; width: 0; height: 0; border: 4px solid transparent; border-top: 5px solid #333; }
.ar1 { margin-left: 4px; }

.workarea { flex: 1; min-height: 0; display: flex; padding-left: 4px; }
.editor { width: 2047px; display: flex; flex-direction: column; border: solid #9a9a9a; border-width: 2px 4px 5px 5px; border-radius: 6px 6px 0 0; }
.tabs { height: 36px; flex: none; display: flex; }
.tab {
  width: 456px;
  display: flex; align-items: center;
  padding: 0 0 0 1px;
  background: linear-gradient(#8a8a8a, #c4c4c4);
  font-size: 20px;
  color: #111;
  white-space: nowrap;
}
.tab-text { position: relative; top: -1px; }
.tab-ico { width: 23px; height: 25px; margin-right: 8px; flex: none; }
.tab-x { width: 16px; height: 16px; margin-left: 11px; flex: none; }
.tab-fill { flex: 1; display: flex; justify-content: flex-end; gap: 14px; padding: 6px 8px 0 0; background: #e4e3e5; border-bottom: 3px solid #a3a3a3; }
.win-min { width: 14px; height: 8px; border: 2px solid #444; border-radius: 1px; margin-top: 2px; }
.win-max { width: 14px; height: 18px; border: 2px solid #444; border-top-width: 4px; border-radius: 1px; background: #fff; }

.canvas { flex: 1; min-height: 0; position: relative; background: #fff; overflow: hidden; }
.links { position: absolute; inset: 0; width: 100%; height: 100%; }
.l-main { fill: none; stroke: #cfe07e; stroke-width: 4; }
.l-main.alt { stroke: #d6dcb2; }
.l-sub { fill: none; stroke: #cfe07e; stroke-width: 2.500; }

.node {
  position: absolute;
  display: flex; align-items: center; justify-content: center;
  white-space: nowrap;
  background: #e9f0bc;
  border: 2px solid #d6e49a;
  border-radius: 6px;
  color: #4c5828;
  font-weight: 500;
}
.n-center { left: 366px; top: 172px; width: 509px; height: 78px; padding-bottom: 4px; font-size: 27.300px; font-weight: bold; color: #47531c; border-radius: 8px; }
.big { font-size: 20px; padding-bottom: 2px; }
.small { font-size: 15px; }
.latin { font-size: 16px; }
.sel { box-shadow: 0 0 0 1px #f2f6dc, 0 0 0 5px #2f4c9c, 0 0 0 6px #8da0d0; }
.n1 { left: 907px; top: 66px; width: 170px; height: 47px; }
.n2 { left: 967px; top: 206px; width: 208px; height: 45px; }
.n3 { left: 905px; top: 311px; width: 208px; height: 46px; }
.n-picker { left: 1107px; top: 61px; width: 116px; height: 26px; }
.n-date { left: 1108px; top: 121px; width: 114px; height: 27px; }
.n-c1 { left: 1254px; top: 31px; width: 122px; height: 26px; }
.n-c2 { left: 1254px; top: 62px; width: 122px; height: 25px; padding-bottom: 1px; }
.n-c3 { left: 1254px; top: 92px; width: 122px; height: 25px; padding-bottom: 1px; }
.n-bug { left: 1408px; top: 61px; width: 181px; height: 26px; padding-bottom: 1px; }
.n-view { left: 1409px; top: 92px; width: 337px; height: 25px; padding: 0 3px 1px 0; }

.fold { position: absolute; width: 12px; height: 12px; border-radius: 50%; background: #d3dff3; border: 1px solid #a9bfe2; }
.f1 { left: 1080px; top: 83px; }
.f2 { left: 1227px; top: 68px; }
.f3 { left: 1381px; top: 68px; }
.f4 { left: 1381px; top: 98px; background: #c8d8c0; }
.mark { position: absolute; width: 15px; height: 15px; border-radius: 50%; background: #0d2a8c; }
.m1 { left: 1224px; top: 126px; }
.m2 { left: 1592px; top: 66px; }
.m3 { left: 1178px; top: 221px; }
.m4 { left: 1116px; top: 326px; }
.cursor { position: absolute; left: 1384px; top: 103px; width: 20px; height: 34px; }

.sheetbar { height: 36px; flex: none; display: flex; background: #e3e2e4; border-top: 2px solid #bcbcbc; }
.sheet { width: 68px; margin-top: -2px; background: #fff; border-radius: 0 0 4px 0; font-size: 19px; color: #3e3e3e; padding: 5px 0 0 6px; }
.sheet-right { flex: 1; display: flex; justify-content: flex-end; align-items: center; padding-right: 13px; }
.share { font-size: 16.500px; color: #777; margin-right: 13px; }
.vline { width: 1px; height: 100%; background: #cfcfcf; }
.funnel { width: 26px; height: 30px; margin: 0 7px; }
.zoom-btn { width: 20px; height: 20px; }
.zoom-btn.first { margin-left: 11px; }
.pct { font-size: 17px; color: #666; margin: 0 16px 0 16px; }
.zoom-btn + .zoom-btn { margin-left: 13px; }

.side { width: 36px; margin-left: 4px; flex: none; display: flex; flex-direction: column; gap: 6px; padding-top: 4px; }
.side-box { height: 122px; width: 36px; border: 1px solid #d6d5d8; border-radius: 6px; background: #e6e5e7; display: flex; flex-direction: column; align-items: center; padding-top: 6px; }
.grip { width: 28px; height: 6px; border-top: 2px solid #aaa; border-radius: 2px; background: #f4f4f4; }
.si { width: 22px; height: 22px; flex: none; }
.box-a .si:nth-of-type(1) { margin-top: 13px; width: 16px; height: 16px; }
.box-a .si:nth-of-type(2) { margin-top: 14px; }
.box-a .si:nth-of-type(3) { margin-top: 13px; }
.box-b .si:nth-of-type(1) { margin-top: 13px; width: 16px; height: 16px; }
.box-b .si:nth-of-type(2) { margin-top: 13px; }
.box-b .si:nth-of-type(3) { margin-top: 10px; }
.big-si { width: 26px !important; height: 26px !important; }

.statusbar { height: 45px; flex: none; display: flex; align-items: center; padding-left: 7px; font-size: 20px; color: #3c3c3c; }
.status-main { width: 1363px; }
.status-cell { height: 36px; display: flex; align-items: center; border-left: 1px solid #b6b6b6; }
.auto { width: 135px; padding-left: 15px; font-size: 16.500px; white-space: nowrap; }
.user { width: 107px; padding-left: 14px; font-size: 17px; color: #666; border-right: 2px solid #c0c0c0; }
.dot { width: 11px; height: 13px; border-radius: 50%; background: #549a4a; margin-right: 10px; }

/* dock */
.dock {
  position: absolute;
  left: 619px; bottom: 0;
  width: 1162px; height: 103px;
  padding: 5px 0 0 5px;
  display: flex;
  background: #3f7ac2;
  border-top: 1px solid #20406f;
}
.slot { width: 85.500px; height: 97px; position: relative; flex: none; }
.slot svg { width: 86px; height: 86px; }
.run::after { content: ""; position: absolute; left: 41px; top: 87px; width: 5px; height: 5px; border-radius: 50%; background: #0b1e45; }
.dock-sep { width: 2px; height: 78px; margin: 12px 19px 0 20px; background: #2c5c98; flex: none; }
.term { width: 68px; height: 60px; margin: 8px 0 0 9px; background: #111; border-top: 2px solid #8aa; border-radius: 2px; color: #ddd; font-family: "Liberation Mono", monospace; font-weight: bold; font-size: 20px; padding: 8px 0 0 7px; }
.term.exec { color: #3fae45; font-size: 13px; padding-top: 10px; }

.watermark { position: absolute; right: 2px; bottom: 1px; font-size: 17px; line-height: 22px; color: #c3ccd9; white-space: nowrap; }

.floor { height: 8px; position: relative; }
.floor-tab { position: absolute; left: 1168px; top: 0; width: 16px; height: 8px; background: #777; }
```
